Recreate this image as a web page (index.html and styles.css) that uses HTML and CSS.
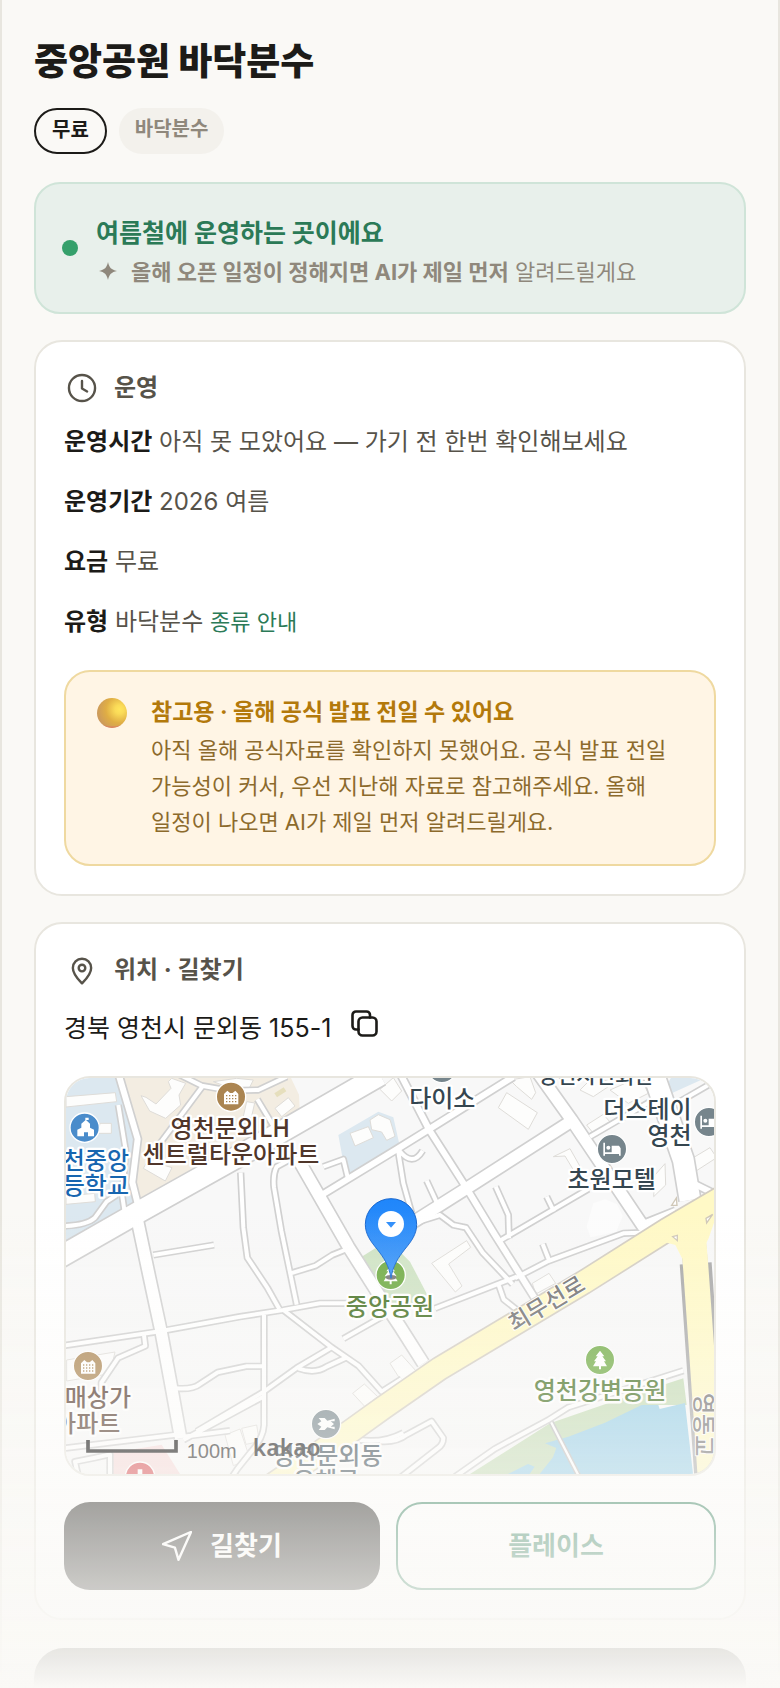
FILE: index.html
```html
<!DOCTYPE html>
<html lang="ko">
<head>
<meta charset="utf-8">
<meta name="viewport" content="width=device-width, initial-scale=1">
<title>중앙공원 바닥분수</title>
<link rel="stylesheet" href="styles.css">
</head>
<body>
<main class="page">
	<h1 class="title">중앙공원 바닥분수</h1>
	<ul class="chips">
		<li class="chip chip-free">무료</li>
		<li class="chip">바닥분수</li>
	</ul>

	<section class="notice">
		<span class="dot"></span>
		<div class="notice-body">
			<h2 class="notice-title">여름철에 운영하는 곳이에요</h2>
			<p class="notice-sub">
				<svg class="spark" viewBox="0 0 24 24" aria-hidden="true"><path d="M12 2c1.200 5.600 3.400 7.800 9 9-5.600 1.200-7.800 3.400-9 9-1.200-5.600-3.400-7.800-9-9 5.600-1.200 7.800-3.400 9-9z"/></svg>
				<span><b>올해 오픈 일정이 정해지면 AI가 제일 먼저</b> 알려드릴게요</span>
			</p>
		</div>
	</section>

	<section class="card">
		<h2 class="card-head">
			<svg class="icon" viewBox="0 0 24 24" aria-hidden="true"><circle cx="12" cy="12" r="8.700"/><path d="M12 7.300v5l3.400 2"/></svg>
			운영
		</h2>
		<p class="row"><b>운영시간</b> 아직 못 모았어요 — 가기 전 한번 확인해보세요</p>
		<p class="row"><b>운영기간</b> 2026 여름</p>
		<p class="row"><b>요금</b> 무료</p>
		<p class="row"><b>유형</b> 바닥분수 <a href="#types">종류 안내</a></p>
		<div class="caution">
			<svg class="ball" viewBox="0 0 30 30" aria-hidden="true">
				<defs>
					<radialGradient id="gold" cx="75%" cy="38%" r="75%">
						<stop offset="0" stop-color="#ffe55c"/>
						<stop offset=".2" stop-color="#fadb58"/>
						<stop offset=".6" stop-color="#e0ae44"/>
						<stop offset="1" stop-color="#cc9a5c"/>
					</radialGradient>
				</defs>
				<circle cx="15" cy="15" r="15" fill="url(#gold)"/>
				<path d="M6 27a15 15 0 0 0 18 0q-9 3-18 0z" fill="#dd7a66" opacity=".8"/>
			</svg>
			<div>
				<h3 class="caution-title">참고용 · 올해 공식 발표 전일 수 있어요</h3>
				<p class="caution-text">아직 올해 공식자료를 확인하지 못했어요. 공식 발표 전일 가능성이 커서, 우선 지난해 자료로 참고해주세요. 올해 일정이 나오면 AI가 제일 먼저 알려드릴게요.</p>
			</div>
		</div>
	</section>

	<section class="card">
		<h2 class="card-head">
			<svg class="icon" viewBox="0 0 24 24" aria-hidden="true"><path d="M12 20.900c-1.200-1.300-6.100-5.900-6.100-10.300a6.100 6.100 0 0 1 12.200 0c0 4.400-4.900 9-6.100 10.300z"/><circle cx="12" cy="10.700" r="2.200"/></svg>
			위치 · 길찾기
		</h2>
		<div class="address">
			<span>경북 영천시 문외동 155-1</span>
			<button class="copy" type="button" aria-label="주소 복사">
				<svg viewBox="0 0 28 28" aria-hidden="true"><rect x="7.500" y="7.500" width="18" height="18" rx="4"/><path d="M7.500 19.500H5A3.500 3.500 0 0 1 1.500 16V5A3.500 3.500 0 0 1 5 1.500h10.500a3.500 3.500 0 0 1 3.500 3.500v2.500"/></svg>
			</button>
		</div>

		<div class="map">
			<svg viewBox="48 54 1944 1188" preserveAspectRatio="xMidYMid slice" role="img" aria-label="지도">
				<defs>
					<linearGradient id="pin" x1="0" y1="0" x2="0" y2="1">
						<stop offset="0" stop-color="#1f86fb"/>
						<stop offset="1" stop-color="#3d96f8"/>
					</linearGradient>
					<g id="narrow">
						<path d="M205 135l22 135-10 140 6 40M40 498q70-2 95-25l35-48 30-20"/>
						<path d="M380 40l75 37 85 15 85-2 85-40M457 80L330 250M622 118l75 125"/>
						<path d="M310 585l182-30M572 338l8 165 12 90 60 90 36 64"/>
						<path d="M735 290l-55 30q-12 25-8 62l22 130 46 222M722 640l75-23 50-32 45-18"/>
						<path d="M820 320l60-22 12 50 8 6"/>
						<path d="M1044 270l16 100 25 90M1048 272q40 50 70 0M1130 362l30 65"/>
						<path d="M1337 380l38 85 2 70M1350 542l265-155M1490 410l22 45"/>
						<path d="M1395 655l100-52 225-83 55-2M1478 552l18 46"/>
						<path d="M1100 487l70-22 40 30 38 8 50 75 90 95"/>
						<path d="M1400 650l-245 95M1345 672l16 46 50 40"/>
						<path d="M1880 130l130-75M1620 230l180-105"/>
						<path d="M40 857l290-43 240-44 130-20 110-20h90"/>
						<path d="M282 826l4 32-82 36-50 74v60"/>
						<path d="M378 985q50 4 70-12l55-36 85-18h50"/>
						<path d="M642 765v330q-2 40-40 82l-40 50-20 30"/>
						<path d="M700 750l145 112 80 55 70 78 60-38M845 862l-105 62-100 72-200 118"/>
						<path d="M745 925q50 18 85-5l60-28M640 1010l-240 130M400 1130l140-18"/>
						<path d="M880 836l120-68M930 1140q70 10 130-22"/>
						<path d="M40 1165l350-42M85 1250l-10-45 60-12 45-10v70"/>
						<path d="M990 1144q50 4 80-20l75-40 35 50q0 20-18 32l-110 86"/>
						<path d="M1215 1250l120-84 160-86 60-38 345-110"/>
					</g>
					<g id="medium">
						<path d="M205 40l58 197-16 130 18 72"/>
						<path d="M815 405l225-137 100-62 250-156"/>
						<path d="M1050 40l88 170 112 175 82 135 82 130 50 80"/>
						<path d="M1930 370l80 40"/>
					</g>
					<g id="wide">
						<path d="M262 480l36 170 36 168 32 172 26 145"/>
						<path d="M740 290l155 270 95 150 60 90 70 110"/>
						<path d="M1060 505l190-120 315-202M1465 40l100 140 215 320 100-40"/>
					</g>
					<g id="flats">
						<path fill="#fff" d="M-21 21v-31l10-10 8 7h8l8-7 9 10v31z"/>
						<path class="windows" d="M-15-5h32M-15 4h32M-15 13h32"/>
					</g>
					<g id="bed">
						<path fill="#fff" d="M-26-19h5v29h20v-20h22l5 8v22h-5v-5h-42v5h-5z"/>
						<circle cx="-11" cy="-4" r="6" fill="#fff"/>
					</g>
					<path id="tree" fill="#fff" d="M0-28l13 17h-6l11 15h-6l9 15h-18v9h-6v-9h-18l9-15h-6l11-15h-6z"/>
				</defs>

				<rect x="48" y="54" width="1944" height="1188" fill="#f8f8f8"/>
				<path fill="#dce8f0" d="M48 54h152l62 181-12 125 14 62-47 25-169 98z"/>
				<path fill="#f3ede2" d="M218 54h505l24 50 2 44-481 272-22-50 17-130z"/>
				<path fill="#dce8f0" d="M865 225l120-70 45 17 22 98-150 74-24-48zM1850 75l15-25h110l-110 50z"/>
				<path fill="#cfe3c4" d="M935 590l80-50 65 65 60 115-100 30z"/>
				<path fill="#f6d9d9" d="M185 1178l150-24 55 88H180z"/>
				<path fill="#c5dcb6" d="M1260 1242l240-152 230-80 170-55 10 80-100 0-200 100-120 110z"/>
				<path fill="#98cfe8" d="M1485 1150l70-20 110-42 110-53h50l4 12 76-18 24 213h-555l60-30 20 8-15 22h30l40-50 10-28z"/>
				<g class="block">
					<path d="M48 110l148-12 4 27-152 16zM150 190h34v30h-40zM48 408l86-8 2 25-88 8z"/>
					<path d="M365 55l42 15-20 35 5 30-45 40-48-22-26-46 15 5 30 20 45-47-8-20zM490 65l70-10 50 5-20 40-60-20zM590 125l24 4-10 44-24-4zM675 145l40-32 20 25-40 32zM280 325l14-24 72 22-20 40z"/>
					<path d="M900 220l55-20 15 33-55 25zM960 180l25-16 35 15 15 50-25 12-15-25-30-7z"/>
					<path d="M990 88l40-35 25 40-30 30zM1370 98l92 60-27 50-90-65zM1380 60l60-10 17 48-12 20-45-38zM1610 195l50-32 28 32-50 35zM1510 290l50-24 35 62-20 10-30-50zM1910 305l70-42 20 30-65 42zM1815 345l30-34 2 64-36 35zM1680 90l90-40 25 50-60 30zM1590 90l40-40 60 20-60 40z"/>
					<path d="M1145 610l105-68 12 20-66 50 40 66-20 18zM1447 670l50-30 20 30-60 32z"/>
					<path d="M50 900l145-24-15 65-130 22zM908 1000l35-28 40 38-38 30zM1020 910l35-25 45 50-45 30zM525 1125l45-18 30 90-50 20zM575 1105l45-10 8 50-40 8z"/>
				</g>
				<path fill="#e6dfbd" d="M673 100l28-18 8 12-28 18z"/>
				<path fill="#fcfcfc" d="M1610 500l20-70 35-12 35 14 18 36-20 48-76 16z"/>

				<path class="walk-edge" d="M1500 1080l90 175"/>
				<path class="walk" d="M1500 1080l90 175"/>
				<use href="#narrow" class="narrow-edge"/>
				<use href="#medium" class="medium-edge"/>
				<use href="#wide" class="wide-edge"/>
				<path class="avenue-edge" d="M20 597l245-140 375-210L990 45"/>
				<path class="avenue-edge" d="M1810 40l90 260 20 120"/>
				<use href="#narrow" class="narrow"/>
				<use href="#medium" class="medium"/>
				<use href="#wide" class="wide"/>
				<path class="avenue" d="M20 597l245-140 375-210L990 45"/>
				<path class="avenue" d="M1810 40l90 260 20 120"/>
				<path class="bridge-edge" d="M1937 610l20 290 24 350"/>
				<path class="trunk-edge" d="M660 1280l240-165 100-72 170-118 430-257 250-158 170-100M1925 500l12 120"/>
				<path class="bridge" d="M1925 470l12 150 20 280 24 350"/>
				<path class="trunk" d="M660 1280l240-165 100-72 170-118 430-257 250-158 170-100"/>
				<path fill="#fff9c6" d="M1840 545l160-150v70l-24 70-30 60h-50l-20-40z"/>
				<path class="island" d="M1865 436l14-22 2 22zM1868 530l14-4v16zM1968 475l20-12-18 26z"/>

				<g class="poi">
					<circle cx="104" cy="203" r="44" fill="#4a8ccb"/>
					<path fill="#fff" d="M82 229v-20l12-6v-12l12-10v-8h10v7h-8l12 11v12l12 6v20h-18v-12h-12v12z"/>
					<circle cx="543" cy="110" r="44" fill="#ab8551"/>
					<use href="#flats" x="543" y="112"/>
					<circle cx="114" cy="918" r="44" fill="#ab8551"/>
					<use href="#flats" x="114" y="920"/>
					<circle cx="1176" cy="24" r="44" fill="#76858c"/>
					<circle cx="1686" cy="267" r="44" fill="#76858c"/>
					<use href="#bed" x="1686" y="267"/>
					<circle cx="1977" cy="186" r="44" fill="#76858c"/>
					<use href="#bed" x="1977" y="186"/>
					<circle cx="1650" cy="900" r="44" fill="#6fab43"/>
					<use href="#tree" x="1650" y="900"/>
					<circle cx="1022" cy="645" r="44" fill="#6fab43"/>
					<use href="#tree" x="1022" y="645"/>
					<circle cx="828" cy="1092" r="44" fill="#76858c"/>
					<path fill="#fff" d="M802 1092l12-8-8-10h18l8 8 22-6v8h-12l10 8-10 8h12v8l-22-6-8 8h-18l8-10z"/>
					<circle cx="270" cy="1250" r="44" fill="#d8494f"/>
					<path fill="#fff" d="M263 1228h14v15h15v12h-44v-12h15z"/>
				</g>

				<g class="label">
					<text x="237" y="327" text-anchor="end" fill="#1766b0">천중앙</text>
					<text x="237" y="402" text-anchor="end" fill="#1766b0">등학교</text>
					<text x="541" y="230" fill="#50362a">영천문외LH</text>
					<text x="543" y="310" fill="#50362a">센트럴타운아파트</text>
					<text x="1177" y="142" fill="#354650">다이소</text>
					<text class="small" x="1637" y="70" fill="#354650">영천시민회관</text>
					<text x="1925" y="173" text-anchor="end" fill="#354650">더스테이</text>
					<text x="1925" y="253" text-anchor="end" fill="#354650">영천</text>
					<text x="1685" y="383" fill="#354650">초원모텔</text>
					<text x="1020" y="766" fill="#447022">중앙공원</text>
					<text x="1650" y="1017" fill="#447022">영천강변공원</text>
					<text x="243" y="1038" text-anchor="end" fill="#50362a">매상가</text>
					<text x="211" y="1115" text-anchor="end" fill="#50362a">아파트</text>
					<text x="832" y="1211" fill="#354650">영천문외동</text>
					<text x="828" y="1288" fill="#354650">우체국</text>
					<text class="street" transform="translate(1502 752) rotate(-31)" fill="#707070">최무선로</text>
					<text class="street" transform="translate(1938 1094) rotate(90)" fill="#707070">영동교</text>
				</g>
				<path class="scale" d="M114 1140v33h264v-33"/>
				<text class="meters" x="410" y="1193">100m</text>
				<text class="brand" x="608" y="1187">kakao</text>

				<ellipse cx="1023" cy="652" rx="16" ry="7" fill="#777"/>
				<path fill="url(#pin)" stroke="#1666cf" stroke-width="3" d="M1023 655c-6-40-22-62-42-88-20-24-35-45-35-74a77 77 0 0 1 154 0c0 29-15 50-35 74-20 26-36 48-42 88z"/>
				<circle cx="1023" cy="492" r="39" fill="#fff"/>
				<path fill="#2d8dfa" d="M1008 486h30l-15 17z"/>
			</svg>
		</div>

		<div class="actions">
			<button class="btn btn-dark" type="button">
				<svg viewBox="0 0 30 30" aria-hidden="true"><path d="M29 1L16.500 28.800l-3.600-12.200L1 13.200z"/></svg>
				길찾기
			</button>
			<button class="btn btn-line" type="button">플레이스</button>
		</div>
	</section>

	<section class="card-dark"></section>
</main>
<div class="fade"></div>
</body>
</html>
```

FILE: styles.css
```css
*{ margin:0; padding:0; box-sizing:border-box; list-style:none;}
body{
	background:#faf9f6;
	color:#1c1b18;
	font-family:Inter, "Noto Sans CJK KR", sans-serif;
	font-size:24px;
	line-height:36px;
	word-break:keep-all;
}
button{ font:inherit; background:none; border:0; cursor:pointer;}
a{ text-decoration:none;}

.page{
	height:100vh;
	overflow:hidden;
	padding:36px 32px 0;
	border:2px solid #e8e6df;
	border-width:0 2px;
}
.title{ font-size:37px; line-height:52px; font-weight:800;}

/* chips */
.chips{ display:flex; gap:12px; margin:20px 0 28px;}
.chip{
	padding:1px 16px 5px;
	border-radius:24px;
	background:#f3f1ec;
	color:#8f887c;
	font-size:20px;
	font-weight:600;
	line-height:40px;
}
.chip-free{
	padding:0 16px 2px;
	border:2px solid #1c1b18;
	background:none;
	color:#1c1b18;
}

/* season notice */
.notice{
	display:flex;
	align-items:center;
	gap:18px;
	padding:20px 26px;
	border:2px solid #cfe4d8;
	border-radius:26px;
	background:#e8f0eb;
}
.dot{ width:16px; height:16px; border-radius:50%; background:#35a06b; flex:none;}
.notice-body{ padding-top:10px;}
.notice-title{ font-size:25px; line-height:38px; font-weight:700; color:#2b7a57;}
.notice-sub{
	display:flex;
	align-items:center;
	gap:11px;
	color:#8f887c;
	font-size:22px;
	line-height:40px;
}
.spark{ width:24px; height:24px; fill:#8f887c; flex:none;}

/* cards */
.card{
	margin-top:26px;
	padding:28px;
	border:2px solid #e8e6df;
	border-radius:28px;
	background:#fff;
}
.card-head{
	display:flex;
	align-items:center;
	gap:14px;
	font-size:24px;
	line-height:36px;
	font-weight:700;
	color:#57534a;
}
.icon{
	width:36px;
	height:36px;
	fill:none;
	stroke:#57534a;
	stroke-width:1.6;
	stroke-linecap:round;
	stroke-linejoin:round;
}
.row{ margin-top:24px; color:#57534a;}
.card-head + .row{ margin-top:18px;}
.row b{ color:#1c1b18; font-weight:700;}
.row a{ color:#2b7a57; font-size:22px;}

.caution{
	display:flex;
	gap:24px;
	margin-top:30px;
	padding:20px 30px 24px 31px;
	border:2px solid #efd9a0;
	border-radius:26px;
	background:#fff5e5;
}
.ball{ width:30px; height:30px; margin-top:6px; flex:none;}
.caution-title{ font-size:23px; line-height:40px; font-weight:700; color:#b3790b;}
.caution-text{ font-size:22px; line-height:36px; color:#8c6a2c;}

/* address + map */
.address{ display:flex; align-items:center; gap:20px; margin-top:22px; font-size:25px;}
.copy{ width:28px; height:28px; margin-bottom:8px;}
.copy svg{
	display:block;
	width:28px;
	height:28px;
	fill:none;
	stroke:#1c1b18;
	stroke-width:2.6;
	stroke-linecap:round;
}
.map{
	height:400px;
	margin-top:30px;
	border:2px solid #e8e6df;
	border-radius:26px;
	overflow:hidden;
}
.map svg{ display:block; width:100%; height:100%;}
.block path{ fill:#fdfdfc; stroke:#dedcd8; stroke-width:3;}
.narrow-edge, .narrow, .medium-edge, .medium, .wide-edge, .wide, .avenue-edge, .avenue,
.trunk-edge, .trunk, .bridge-edge, .bridge, .walk, .walk-edge, .scale{ fill:none; stroke-linejoin:round;}
.narrow-edge, .medium-edge, .wide-edge, .avenue-edge{ stroke:#d0d0d0;}
.narrow, .medium, .wide, .avenue, .walk{ stroke:#fff;}
.narrow-edge{ stroke-width:22;}
.narrow{ stroke-width:12;}
.medium-edge{ stroke-width:28;}
.medium{ stroke-width:18;}
.wide-edge{ stroke-width:44;}
.wide{ stroke-width:34;}
.avenue-edge{ stroke-width:72;}
.avenue{ stroke-width:62;}
.walk-edge{ stroke:#bdbdbd; stroke-width:16;}
.walk{ stroke-width:7;}
.trunk-edge{ stroke:#d3cdc2; stroke-width:76;}
.trunk{ stroke:#fff9c6; stroke-width:66;}
.bridge-edge{ stroke:#a9a9a9; stroke-width:96;}
.bridge{ stroke:#fff9c6; stroke-width:76;}
.island{ fill:#fff; stroke:#d0c8b8; stroke-width:4;}
.poi > circle{ stroke:#fff; stroke-width:4;}
.windows{ stroke:#ab8551; stroke-width:4; stroke-dasharray:4 5;}
.label text{
	font-family:"Noto Sans CJK KR", sans-serif;
	font-size:72px;
	font-weight:500;
	text-anchor:middle;
	stroke:#fff;
	stroke-width:14;
	stroke-linejoin:round;
	paint-order:stroke;
}
.label text[text-anchor="end"]{ text-anchor:end;}
.label .small{ font-size:63px;}
.label .street{ font-size:69px; stroke-width:6;}
.scale{ stroke:#000; stroke-width:11; stroke-linejoin:miter;}
.meters{ font-family:"Liberation Sans", sans-serif; font-size:60px; fill:#222;}
.brand{ font-family:"Noto Sans", sans-serif; font-size:69px; font-weight:600; fill:#111;}

.actions{ display:flex; gap:16px; margin-top:26px;}
.btn{
	flex:1;
	display:flex;
	align-items:center;
	justify-content:center;
	gap:18px;
	height:88px;
	border-radius:26px;
	font-size:26px;
	font-weight:700;
}
.btn svg{
	width:30px;
	height:30px;
	fill:none;
	stroke:#fff;
	stroke-width:2.4;
	stroke-linejoin:round;
}
.btn-dark{ background:#1c1b18; color:#fff;}
.btn-line{ border:2px solid #2b7a57; color:#2b7a57;}

.card-dark{ height:400px; margin-top:28px; border-radius:30px; background:#1c1b18;}

/* page fades out behind the bottom edge */
.fade{
	position:fixed;
	left:0;
	right:0;
	bottom:0;
	height:480px;
	background:linear-gradient(rgba(250,249,246,0), #faf9f6);
	pointer-events:none;
}
```
